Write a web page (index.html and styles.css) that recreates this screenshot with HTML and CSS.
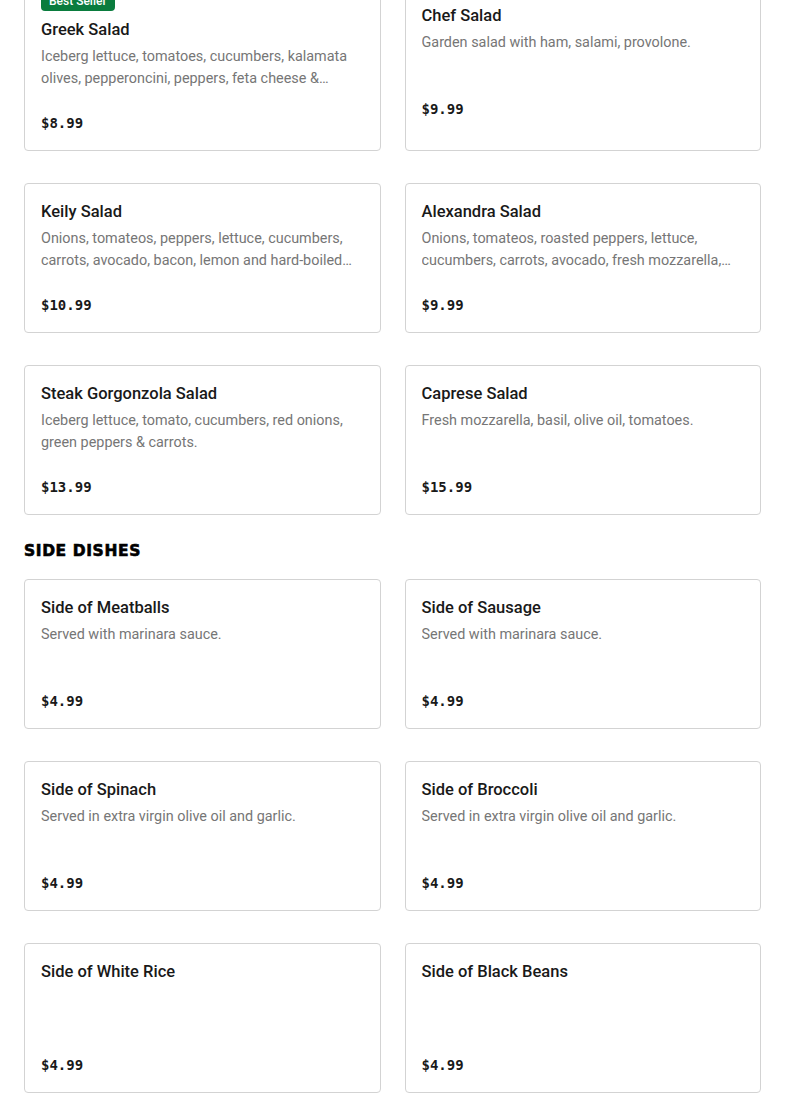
FILE: index.html
```html
<!DOCTYPE html>
<html lang="en">
<head>
<meta charset="utf-8">
<title>Menu</title>
<link rel="stylesheet" href="styles.css">
</head>
<body>
<main class="menu">
  <section class="category">
    <div class="grid">
      <article class="card">
        <span class="badge">Best Seller</span>
        <h3 class="title">Greek Salad</h3>
        <p class="desc">Iceberg lettuce, tomatoes, cucumbers, kalamata olives, pepperoncini, peppers, feta cheese &amp; balsamic vinaigrette.</p>
        <div class="price">$8.99</div>
      </article>
      <article class="card">
        <h3 class="title">Chef Salad</h3>
        <p class="desc">Garden salad with ham, salami, provolone.</p>
        <div class="price">$9.99</div>
      </article>
      <article class="card">
        <h3 class="title">Keily Salad</h3>
        <p class="desc">Onions, tomateos, peppers, lettuce, cucumbers, carrots, avocado, bacon, lemon and hard-boiled eggs.</p>
        <div class="price">$10.99</div>
      </article>
      <article class="card">
        <h3 class="title">Alexandra Salad</h3>
        <p class="desc">Onions, tomateos, roasted peppers, lettuce, cucumbers, carrots, avocado, fresh mozzarella, lemon and olive oil.</p>
        <div class="price">$9.99</div>
      </article>
      <article class="card">
        <h3 class="title">Steak Gorgonzola Salad</h3>
        <p class="desc">Iceberg lettuce, tomato, cucumbers, red onions, green peppers &amp; carrots.</p>
        <div class="price">$13.99</div>
      </article>
      <article class="card">
        <h3 class="title">Caprese Salad</h3>
        <p class="desc">Fresh mozzarella, basil, olive oil, tomatoes.</p>
        <div class="price">$15.99</div>
      </article>
    </div>
  </section>

  <section class="category">
    <h2 class="category-title">SIDE DISHES</h2>
    <div class="grid">
      <article class="card">
        <h3 class="title">Side of Meatballs</h3>
        <p class="desc">Served with marinara sauce.</p>
        <div class="price">$4.99</div>
      </article>
      <article class="card">
        <h3 class="title">Side of Sausage</h3>
        <p class="desc">Served with marinara sauce.</p>
        <div class="price">$4.99</div>
      </article>
      <article class="card">
        <h3 class="title">Side of Spinach</h3>
        <p class="desc">Served in extra virgin olive oil and garlic.</p>
        <div class="price">$4.99</div>
      </article>
      <article class="card">
        <h3 class="title">Side of Broccoli</h3>
        <p class="desc">Served in extra virgin olive oil and garlic.</p>
        <div class="price">$4.99</div>
      </article>
      <article class="card">
        <h3 class="title">Side of White Rice</h3>
        <p class="desc"></p>
        <div class="price">$4.99</div>
      </article>
      <article class="card">
        <h3 class="title">Side of Black Beans</h3>
        <p class="desc"></p>
        <div class="price">$4.99</div>
      </article>
    </div>
  </section>
</main>
</body>
</html>
```
FILE: styles.css
```css
* { box-sizing: border-box; }

html, body {
  margin: 0;
  padding: 0;
  background: #ffffff;
}

body {
  font-family: Roboto, "Liberation Sans", Arial, sans-serif;
  color: #191919;
  overflow: hidden;
}

.menu {
  padding: 0 24px 40px;
  margin-top: -26px;
}

.category + .category {
  margin-top: 24px;
}

.category-title {
  margin: 0 0 16px;
  font-family: "DejaVu Sans", "Liberation Sans", sans-serif;
  font-weight: 700;
  font-size: 15.5px;
  line-height: 24px;
  letter-spacing: 0.6px;
  color: #000000;
  -webkit-text-stroke: 0.6px #000000;
}

.grid {
  display: grid;
  grid-template-columns: 1fr 1fr;
  column-gap: 24px;
  row-gap: 32px;
}

.card {
  display: flex;
  flex-direction: column;
  justify-content: center;
  align-items: flex-start;
  min-height: 150px;
  padding: 16px;
  border: 1px solid #d3d3d3;
  border-radius: 4px;
  background: #ffffff;
}

.badge {
  display: inline-block;
  height: 20px;
  padding: 0 8px;
  margin-bottom: 8px;
  border-radius: 4px;
  background: #0a7c3e;
  color: #ffffff;
  font-size: 12px;
  font-weight: 500;
  line-height: 20px;
}

.title {
  margin: 0;
  font-size: 16.5px;
  font-weight: 500;
  line-height: 22px;
  color: #191919;
  width: 100%;
}

.desc {
  margin: 5px 0 0;
  width: 100%;
  height: 44px;
  font-size: 14.4px;
  line-height: 22px;
  color: #767676;
  display: -webkit-box;
  -webkit-line-clamp: 2;
  -webkit-box-orient: vertical;
  overflow: hidden;
}

.price {
  margin-top: 22px;
  font-family: "DejaVu Sans Mono", "Liberation Mono", monospace;
  font-weight: 700;
  font-size: 14px;
  line-height: 22px;
  color: #191919;
}
```
